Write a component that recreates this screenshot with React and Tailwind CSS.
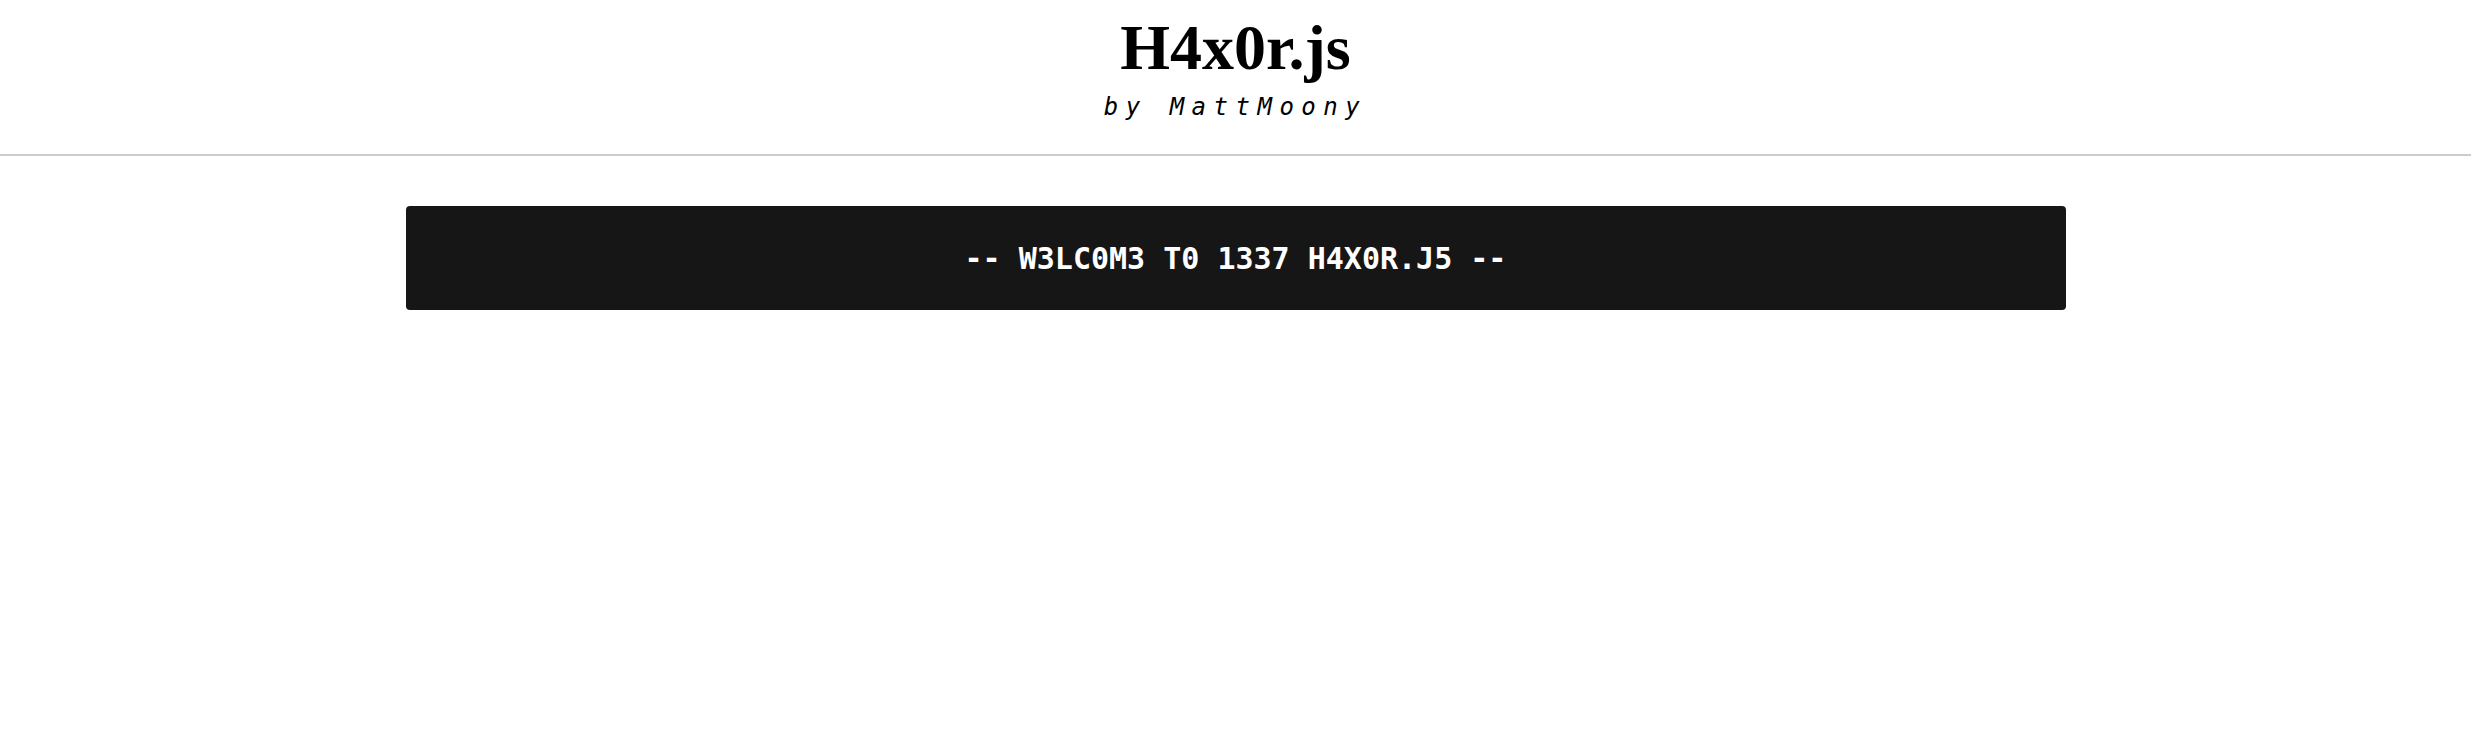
import React from "react";

const App = () => {
  return (
    <div className="min-h-screen bg-white">
      <header className="border-b-2 border-[#cccccc] pt-[16px] pb-[35px] text-center">
        <h1 className="font-['Liberation_Serif',serif] text-[64px] leading-[64px] font-bold text-black">
          H4x0r.js
        </h1>
        <p className="mt-[15px] font-['DejaVu_Sans_Mono',monospace] text-[24px] leading-[24px] italic tracking-[7.5px] text-black">
          by MattMoony
        </p>
      </header>

      <main className="mt-[50px] flex justify-center">
        <div className="flex h-[104px] w-[1660px] items-center justify-center rounded-[4px] bg-[#161616]">
          <span className="font-['DejaVu_Sans_Mono',monospace] text-[30px] font-bold text-white whitespace-pre">
            -- W3LC0M3 T0 1337 H4X0R.J5 --
          </span>
        </div>
      </main>
    </div>
  );
};

export default App;
